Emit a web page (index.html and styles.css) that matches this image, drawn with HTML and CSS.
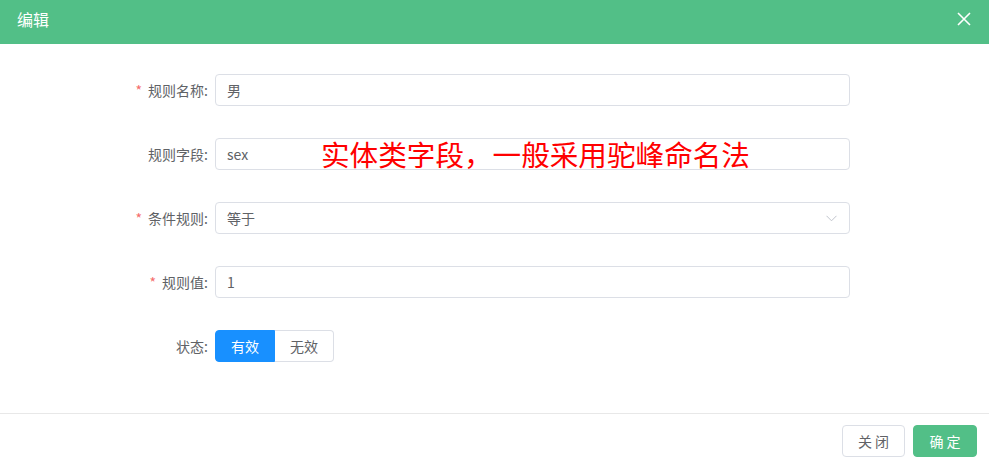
FILE: index.html
```html
<!DOCTYPE html>
<html lang="zh-CN">
<head>
    <meta charset="UTF-8">
    <meta name="viewport" content="width=device-width, initial-scale=1.0">
    <title>编辑</title>
    <link rel="stylesheet" href="styles.css">
</head>
<body>
    <div class="dialog">
        <div class="dialog-header">
            <span class="dialog-title">编辑</span>
            <span class="dialog-close">
                <svg width="14" height="14" viewBox="0 0 14 14"><path d="M1 1 L13 13 M13 1 L1 13" stroke="#fff" stroke-width="1.6" fill="none"/></svg>
            </span>
        </div>

        <div class="dialog-body">
            <div class="form-item">
                <label class="form-label"><span class="required">*</span>规则名称:</label>
                <div class="input">男</div>
            </div>

            <div class="form-item">
                <label class="form-label">规则字段:</label>
                <div class="input field">
                    sex
                    <span class="note">实体类字段，一般采用驼峰命名法</span>
                </div>
            </div>

            <div class="form-item">
                <label class="form-label"><span class="required">*</span>条件规则:</label>
                <div class="input select">
                    等于
                    <svg class="arrow" width="11" height="7" viewBox="0 0 11 7"><path d="M0.5 0.8 L5.5 5.8 L10.5 0.8" stroke="#c0c4cc" stroke-width="1" fill="none"/></svg>
                </div>
            </div>

            <div class="form-item">
                <label class="form-label"><span class="required">*</span>规则值:</label>
                <div class="input">1</div>
            </div>

            <div class="form-item">
                <label class="form-label">状态:</label>
                <div class="radio-group">
                    <span class="radio active">有效</span>
                    <span class="radio">无效</span>
                </div>
            </div>
        </div>

        <div class="dialog-footer">
            <button class="btn">关 闭</button>
            <button class="btn btn-primary">确 定</button>
        </div>
    </div>
</body>
</html>
```

FILE: styles.css
```css
* {
    box-sizing: border-box;
}
body {
    margin: 0;
    font-family: "Noto Sans CJK SC", "Noto Sans", sans-serif;
    font-size: 14px;
    color: #606266;
    background: #fff;
}
.dialog {
    width: 989px;
    height: 464px;
    display: flex;
    flex-direction: column;
}
.dialog-header {
    height: 44px;
    background-color: #52bf87;
    display: flex;
    align-items: center;
    justify-content: space-between;
    padding: 0 18px 0 17px;
}
.dialog-title {
    color: #fff;
    font-size: 16px;
    line-height: 1;
    margin-top: -7px;
}
.dialog-close {
    display: flex;
    margin-top: -7px;
}
.dialog-body {
    flex: 1;
    padding: 30px 139px 0 0;
}
.form-item {
    display: flex;
    align-items: center;
    height: 32px;
    margin-bottom: 32px;
}
.form-label {
    width: 215px;
    padding-right: 7px;
    text-align: right;
    color: #606266;
    font-size: 14px;
}
.required {
    color: #f56c6c;
    margin-right: 6px;
}
.input {
    flex: 1;
    height: 32px;
    border: 1px solid #dcdfe6;
    border-radius: 4px;
    padding: 0 11px;
    display: flex;
    align-items: center;
    color: #606266;
    position: relative;
}
.note {
    position: absolute;
    left: 105px;
    top: -3px;
    color: #ff0000;
    font-size: 28.6px;
    line-height: 36px;
    white-space: nowrap;
}
.select .arrow {
    position: absolute;
    right: 12px;
    top: 12px;
}
.radio-group {
    display: flex;
}
.radio {
    height: 32px;
    width: 60px;
    display: flex;
    align-items: center;
    justify-content: center;
    border: 1px solid #dcdfe6;
    color: #606266;
}
.radio:first-child {
    border-radius: 4px 0 0 4px;
}
.radio:last-child {
    width: 59px;
    border-left: none;
    border-radius: 0 4px 4px 0;
}
.radio.active {
    background-color: #1890ff;
    border-color: #1890ff;
    color: #fff;
}
.dialog-footer {
    height: 51px;
    border-top: 1px solid #e8e8e8;
    display: flex;
    justify-content: flex-end;
    align-items: flex-start;
    gap: 8px;
    padding: 11px 12px 0 0;
}
.btn {
    height: 32px;
    width: 63px;
    border: 1px solid #dcdfe6;
    border-radius: 4px;
    background: #fff;
    color: #606266;
    font-family: inherit;
    font-size: 14px;
    cursor: pointer;
}
.btn-primary {
    width: 64px;
    background-color: #52bf87;
    border-color: #52bf87;
    color: #fff;
}
```
